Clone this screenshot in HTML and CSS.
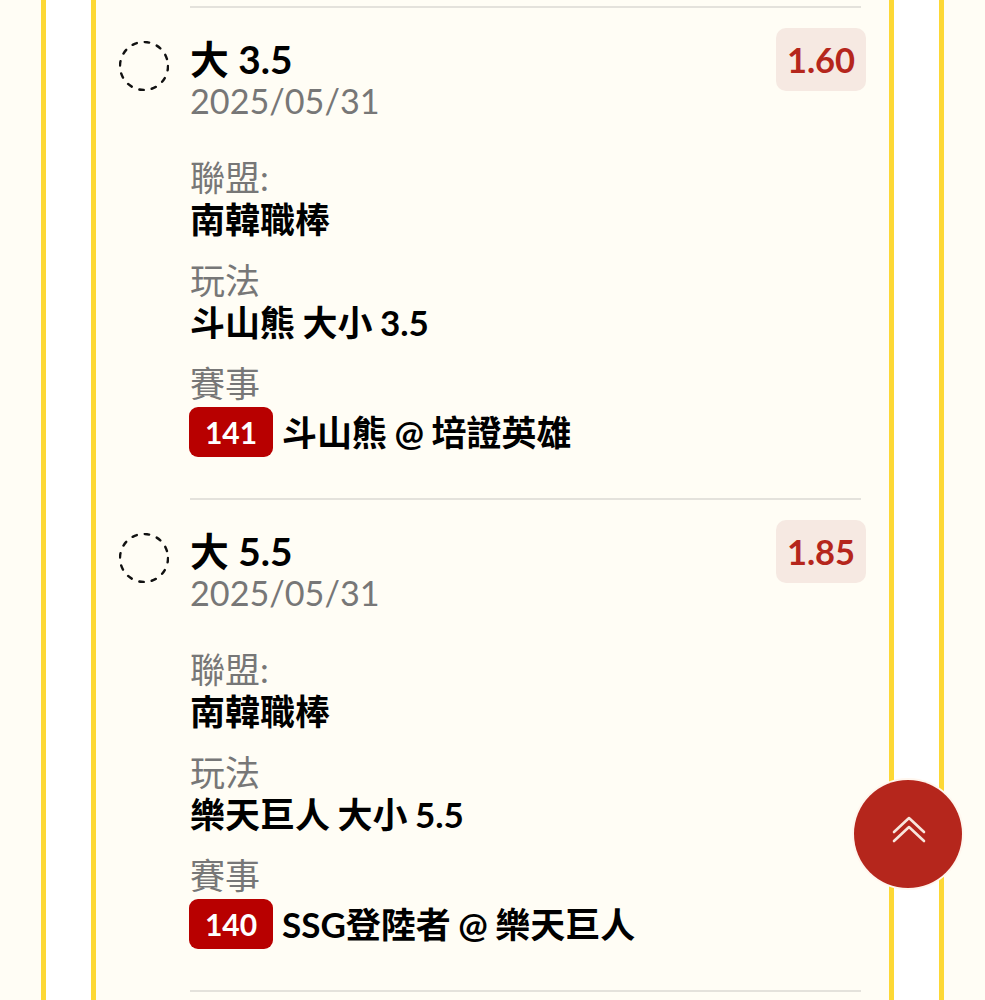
FILE: index.html
```html
<!DOCTYPE html>
<html>
<head>
<title>Bets</title>
<meta name="viewport" content="width=device-width, initial-scale=1.0">
<link rel="stylesheet" href="styles.css">
</head>
<body>
<div class="page">
  <div class="outer">
    <div class="card">

      <div class="bet">
        <svg class="circle" width="50" height="50" viewBox="0 0 50 50"><circle cx="25" cy="25" r="24" fill="none" stroke="#111" stroke-width="2.4" stroke-dasharray="4.5 8.07" stroke-linecap="round"/></svg>
        <div class="info">
          <div class="head">
            <div class="head-text">
              <div class="title">大 3.5</div>
              <div class="date">2025/05/31</div>
            </div>
            <div class="odds">1.60</div>
          </div>
          <div class="field">
            <div class="label">聯盟:</div>
            <div class="value">南韓職棒</div>
          </div>
          <div class="field">
            <div class="label">玩法</div>
            <div class="value">斗山熊 大小 3.5</div>
          </div>
          <div class="field">
            <div class="label">賽事</div>
            <div class="game"><span class="chip">141</span><span class="value">斗山熊 @ 培證英雄</span></div>
          </div>
        </div>
      </div>

      <div class="bet">
        <svg class="circle" width="50" height="50" viewBox="0 0 50 50"><circle cx="25" cy="25" r="24" fill="none" stroke="#111" stroke-width="2.4" stroke-dasharray="4.5 8.07" stroke-linecap="round"/></svg>
        <div class="info">
          <div class="head">
            <div class="head-text">
              <div class="title">大 5.5</div>
              <div class="date">2025/05/31</div>
            </div>
            <div class="odds">1.85</div>
          </div>
          <div class="field">
            <div class="label">聯盟:</div>
            <div class="value">南韓職棒</div>
          </div>
          <div class="field">
            <div class="label">玩法</div>
            <div class="value">樂天巨人 大小 5.5</div>
          </div>
          <div class="field">
            <div class="label">賽事</div>
            <div class="game"><span class="chip">140</span><span class="value">SSG登陸者 @ 樂天巨人</span></div>
          </div>
        </div>
      </div>

      <div class="bet"></div>
    </div>
  </div>
</div>

<button class="to-top">
  <svg width="34" height="30" viewBox="0 0 34 30" fill="none" stroke="#f8e6dc" stroke-width="2.6" stroke-linecap="round" stroke-linejoin="round">
    <path d="M2 17 L17 3 L32 17"/>
    <path d="M2 26 L17 12 L32 26"/>
  </svg>
</button>
</body>
</html>
```
FILE: styles.css
```css
html, body {
  margin: 0;
  height: 1000px;
  overflow: hidden;
}

body {
  background: #fffdf5;
  font-family: Lato, "Noto Sans CJK TC", sans-serif;
}

.page {
  padding: 0 41px;
}

.outer {
  border-left: 5px solid #fdd835;
  border-right: 5px solid #fdd835;
  background: #fff;
  padding: 0 45px;
}

.card {
  border-left: 5px solid #fdd835;
  border-right: 5px solid #fdd835;
  background: #fffdf5;
  padding: 6px 28px 0 94px;
  height: 1000px;
}

/* one bet row, divider sits on top */
.bet {
  position: relative;
  height: 490px;
  border-top: 2px solid #e4e2dc;
}

.circle {
  position: absolute;
  left: -71px;
  top: 33px;
}

.head {
  display: flex;
  justify-content: space-between;
  align-items: flex-start;
  padding-top: 20px;
  margin-right: -5px;
}

.head-text {
  padding-top: 9px;
}

.title {
  font-size: 38.8px;
  line-height: 44px;
  font-weight: 700;
  color: #000;
}

.date {
  font-size: 34.2px;
  line-height: 40px;
  color: #777;
}

.odds {
  width: 90px;
  height: 63px;
  line-height: 64px;
  text-align: center;
  font-size: 34.5px;
  font-weight: 700;
  color: #b5261c;
  background: #f6e9e2;
  border-radius: 10px;
}

.field {
  margin-top: 19px;
}

.head + .field {
  margin-top: 34px;
}

.label {
  font-size: 35px;
  line-height: 44px;
  color: #777;
}

.value {
  font-size: 35px;
  line-height: 40px;
  font-weight: 700;
  word-spacing: -1px;
  color: #000;
}

.game {
  display: flex;
  align-items: center;
  gap: 9px;
  margin-top: 2px;
  margin-left: -1px;
}

.chip {
  width: 84px;
  height: 50px;
  line-height: 51px;
  text-align: center;
  font-size: 30px;
  font-weight: 700;
  color: #fff;
  background: #b80000;
  border-radius: 9px;
}

.to-top {
  position: fixed;
  left: 854px;
  top: 780px;
  width: 108px;
  height: 108px;
  padding: 0 0 8px 2px;
  border: none;
  border-radius: 50%;
  background: #b5261c;
  box-shadow: 0 0 0 2px #fff6ee;
  display: flex;
  align-items: center;
  justify-content: center;
}
```
